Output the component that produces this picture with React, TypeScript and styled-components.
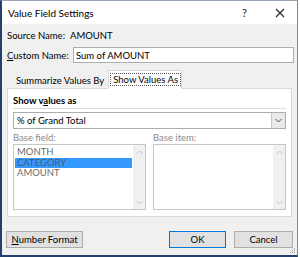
import React from 'react';
import styled, { createGlobalStyle } from 'styled-components';

const GlobalStyle = createGlobalStyle`
  html, body {
    margin: 0;
    padding: 0;
    background: #ffffff;
  }
  body {
    font-family: Lato, 'Noto Sans', sans-serif;
    font-size: 9.5px;
    color: #000;
    white-space: nowrap;
  }
`;

const Chevron = ({ up, color }: { up?: boolean; color: string }) => (
  <svg width="7" height="5" viewBox="0 0 7 5">
    <path
      d={up ? 'M0.5 4 L3.5 1 L6.5 4' : 'M0.5 1 L3.5 4 L6.5 1'}
      fill="none"
      stroke={color}
      strokeWidth="1"
    />
  </svg>
);

const App: React.FC = () => {
  return (
    <>
      <GlobalStyle />
      <Window>
        <TitleBar>
          <Title>Value Field Settings</Title>
          <TitleButton>?</TitleButton>
          <TitleButton>
            <svg width="10" height="10" viewBox="0 0 10 10">
              <path d="M1 1 L9 9 M9 1 L1 9" stroke="#222" strokeWidth="1.1" />
            </svg>
          </TitleButton>
        </TitleBar>
        <Body>
          <FieldRow>
            <Label width={63}>Source Name:</Label>
            <span>AMOUNT</span>
          </FieldRow>
          <FieldRow tall>
            <Label width={66}>
              <u>C</u>ustom Name:
            </Label>
            <TextInput>Sum of AMOUNT</TextInput>
          </FieldRow>
          <TabStrip>
            <Tab>Summarize Values By</Tab>
            <Tab active>
              <FocusRect>Show Values As</FocusRect>
            </Tab>
          </TabStrip>
          <Panel>
            <SectionTitle>
              Show v<u>a</u>lues as
            </SectionTitle>
            <Separator />
            <Dropdown>
              <DropdownText>% of Grand Total</DropdownText>
              <DropButton>
                <Chevron color="#555" />
              </DropButton>
            </Dropdown>
            <Columns>
              <Column>
                <DimLabel>Base field:</DimLabel>
                <ListBox>
                  <ListItems>
                    <ListItem>MONTH</ListItem>
                    <ListItem selected>CATEGORY</ListItem>
                    <ListItem>AMOUNT</ListItem>
                  </ListItems>
                  <ScrollBar>
                    <Chevron up color="#c2c2c2" />
                    <Chevron color="#c2c2c2" />
                  </ScrollBar>
                </ListBox>
              </Column>
              <Column>
                <DimLabel>Base item:</DimLabel>
                <ListBox>
                  <ListItems />
                  <ScrollBar>
                    <Chevron up color="#c2c2c2" />
                    <Chevron color="#c2c2c2" />
                  </ScrollBar>
                </ListBox>
              </Column>
            </Columns>
          </Panel>
          <ButtonRow>
            <Button width={75}>
              <u>N</u>umber Format
            </Button>
            <Spacer />
            <Button width={55} primary>
              OK
            </Button>
            <Button width={57}>Cancel</Button>
          </ButtonRow>
        </Body>
        <Grip>
          <svg width="6" height="6" viewBox="0 0 6 6">
            <rect x="4" y="0" width="1" height="1" fill="#9a9a9a" />
            <rect x="2" y="2" width="1" height="1" fill="#9a9a9a" />
            <rect x="4" y="2" width="1" height="1" fill="#9a9a9a" />
            <rect x="0" y="4" width="1" height="1" fill="#9a9a9a" />
            <rect x="2" y="4" width="1" height="1" fill="#9a9a9a" />
            <rect x="4" y="4" width="1" height="1" fill="#9a9a9a" />
          </svg>
        </Grip>
      </Window>
    </>
  );
};

export default App;

const Window = styled.div`
  position: relative;
  width: 295px;
  height: 254px;
  border-top: 1px solid #9aa6b6;
  border-left: 2px solid #23406a;
  border-bottom: 2px solid #23406a;
  border-right: 1px solid #7d8ba0;
  background: #f0f0f0;
  display: flex;
  flex-direction: column;
`;

const TitleBar = styled.div`
  height: 23px;
  background: #ffffff;
  display: flex;
  align-items: center;
  padding-left: 6px;
  flex-shrink: 0;
`;

const Title = styled.div`
  flex: 1;
  font-size: 10px;
  color: #000;
`;

const TitleButton = styled.div`
  width: 35px;
  height: 23px;
  display: flex;
  align-items: center;
  justify-content: center;
  font-size: 11px;
  color: #222;
`;

const Body = styled.div`
  flex: 1;
  display: flex;
  flex-direction: column;
  padding: 3px 4px 0 5px;
`;

const FieldRow = styled.div<{ tall?: boolean }>`
  display: flex;
  align-items: center;
  height: ${(p) => (p.tall ? 16 : 14)}px;
  margin-top: ${(p) => (p.tall ? 5 : 1)}px;
`;

const Label = styled.div<{ width: number }>`
  width: ${(p) => p.width}px;
  flex-shrink: 0;
`;

const TextInput = styled.div`
  width: 217px;
  height: 14px;
  flex-shrink: 0;
  border: 1px solid #adadad;
  background: #fff;
  display: flex;
  align-items: center;
  padding-left: 2px;
`;

const TabStrip = styled.div`
  display: flex;
  align-items: flex-end;
  margin-top: 8px;
  height: 18px;
  position: relative;
  z-index: 1;
  margin-bottom: -1px;
`;

const Tab = styled.div<{ active?: boolean }>`
  height: ${(p) => (p.active ? 17 : 15)}px;
  display: flex;
  align-items: center;
  padding: 0 ${(p) => (p.active ? 1 : 3)}px 0 ${(p) => (p.active ? 2 : 8)}px;
  background: ${(p) => (p.active ? '#ffffff' : '#f0f0f0')};
  border: 1px solid ${(p) => (p.active ? '#d9d9d9' : 'transparent')};
  border-bottom: ${(p) => (p.active ? '1px solid #ffffff' : '1px solid #d9d9d9')};
`;

const FocusRect = styled.span`
  outline: 1px dotted #555;
  padding: 0 2px;
  line-height: 11px;
`;

const Panel = styled.div`
  width: 273px;
  height: 122px;
  background: #ffffff;
  border: 1px solid #d9d9d9;
  padding: 5px 5px 0 5px;
  display: flex;
  flex-direction: column;
`;

const SectionTitle = styled.div`
  font-weight: bold;
  height: 12px;
  line-height: 12px;
  margin-top: 1px;
`;

const Separator = styled.div`
  height: 1px;
  background: #dcdcdc;
  margin-top: 1px;
`;

const Dropdown = styled.div`
  margin-top: 3px;
  height: 15px;
  border: 1px solid #adadad;
  background: #fff;
  display: flex;
  align-items: center;
`;

const DropdownText = styled.div`
  flex: 1;
  padding-left: 3px;
`;

const DropButton = styled.div`
  width: 13px;
  height: 15px;
  background: #e9e9e9;
  border-left: 1px solid #c8c8c8;
  display: flex;
  align-items: center;
  justify-content: center;
`;

const Columns = styled.div`
  display: flex;
  gap: 7px;
  margin-top: 3px;
`;

const Column = styled.div`
  width: 133px;
  display: flex;
  flex-direction: column;
`;

const DimLabel = styled.div`
  color: #8a8a8a;
  height: 11px;
  line-height: 11px;
  margin-bottom: 1px;
`;

const ListBox = styled.div`
  height: 64px;
  border: 1px solid #c6c6c6;
  background: #fff;
  display: flex;
`;

const ListItems = styled.div`
  flex: 1;
  padding: 2px 1px 0 1px;
  display: flex;
  flex-direction: column;
`;

const ListItem = styled.div<{ selected?: boolean }>`
  height: 10.5px;
  line-height: 10.5px;
  padding-left: 2px;
  color: ${(p) => (p.selected ? '#4d5a6a' : '#6d6d6d')};
  background: ${(p) => (p.selected ? '#3399ff' : 'transparent')};
`;

const ScrollBar = styled.div`
  width: 12px;
  background: #f0f0f0;
  display: flex;
  flex-direction: column;
  align-items: center;
  justify-content: space-between;
  padding: 5px 0 4px;
`;

const ButtonRow = styled.div`
  display: flex;
  gap: 8px;
  margin-top: 14px;
  margin-left: -1px;
`;

const Spacer = styled.div`
  flex: 1;
`;

const Button = styled.div<{ width: number; primary?: boolean }>`
  width: ${(p) => p.width}px;
  height: 15px;
  border: 1px solid ${(p) => (p.primary ? '#0078d7' : '#adadad')};
  background: #e1e1e1;
  display: flex;
  align-items: center;
  justify-content: center;
`;

const Grip = styled.div`
  position: absolute;
  right: 1px;
  bottom: 1px;
  width: 6px;
  height: 6px;
  display: flex;
`;
